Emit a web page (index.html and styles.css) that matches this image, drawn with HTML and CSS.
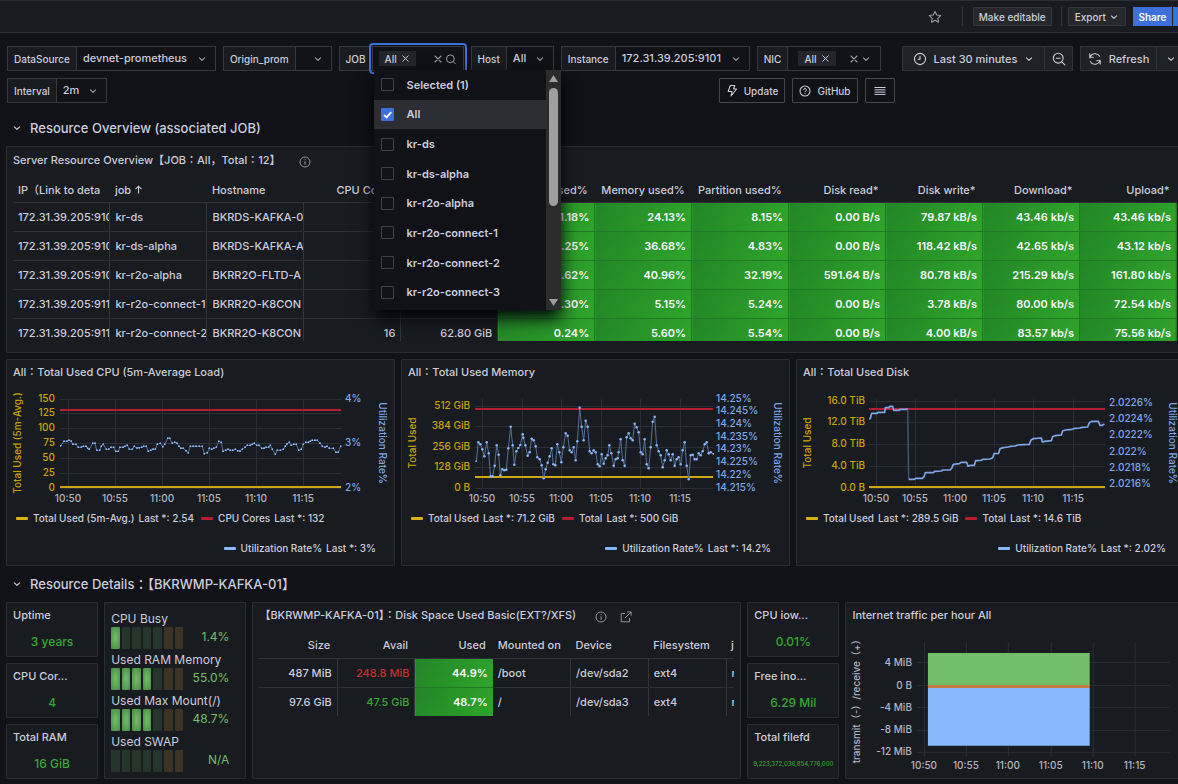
FILE: index.html
```html
<!DOCTYPE html>
<html lang="en">
<head>
<meta charset="utf-8">
<title>Node Exporter Dashboard</title>
<link rel="stylesheet" href="styles.css">
</head>
<body>
<svg class="defs" width="0" height="0" aria-hidden="true">
  <defs>
    <symbol id="chev" viewBox="0 0 10 10"><path d="M2.4 3.8L5 6.4l2.6-2.6" fill="none" stroke="currentColor" stroke-width="1.1" stroke-linecap="round" stroke-linejoin="round"/></symbol>
    <symbol id="cross" viewBox="0 0 10 10"><path d="M2 2l6 6M8 2l-6 6" fill="none" stroke="currentColor" stroke-width="1.1" stroke-linecap="round"/></symbol>
    <symbol id="info" viewBox="0 0 12 12"><circle cx="6" cy="6" r="5" fill="none" stroke="currentColor"/><path d="M6 5.4v3.2M6 3.2v1" stroke="currentColor" stroke-width="1.1"/></symbol>
    <marker id="dot" viewBox="0 0 6 6" refX="3" refY="3" markerWidth="6" markerHeight="6" markerUnits="userSpaceOnUse"><circle cx="3" cy="3" r="2.9" fill="#8ab8ff"/></marker>
    <marker id="dot-lg" viewBox="0 0 6 6" refX="3" refY="3" markerWidth="8" markerHeight="8" markerUnits="userSpaceOnUse"><circle cx="3" cy="3" r="2.8" fill="#8ab8ff"/></marker>
  </defs>
</svg>

<header class="topbar">
  <button class="icon-btn" aria-label="Mark as favorite"><svg width="14" height="14" viewBox="0 0 14 14"><path d="M7 1.4l1.75 3.6 3.9.55-2.85 2.75.7 3.9L7 10.35 3.5 12.2l.7-3.9L1.35 5.55 5.25 5z" fill="none" stroke="currentColor" stroke-width="1.1" stroke-linejoin="round"/></svg></button>
  <span class="divider"></span>
  <button class="tb-btn">Make editable</button>
  <span class="divider"></span>
  <button class="tb-btn export">Export <svg width="10" height="10"><use href="#chev"/></svg></button>
  <span class="share"><button class="share-btn">Share</button><button class="share-btn share-more" aria-label="Share options"></button></span>
</header>

<main class="dash">
  <section class="controls">
    <div class="vars">
      <div class="var"><label for="v-ds">DataSource</label><div class="sel w-ds"><select id="v-ds"><option>devnet-prometheus</option></select><svg width="10" height="10"><use href="#chev"/></svg></div></div>
      <div class="var"><label for="v-or">Origin_prom</label><div class="sel w-or"><select id="v-or"><option></option></select><svg width="10" height="10"><use href="#chev"/></svg></div></div>
      <div class="var job">
        <label for="v-job">JOB</label>
        <div class="multi focus w-job">
          <span class="chip">All <button aria-label="Remove All"><svg width="9" height="9" viewBox="0 0 10 10"><use href="#cross"/></svg></button></span>
          <input id="v-job" type="text">
          <button aria-label="Clear JOB"><svg width="10" height="10"><use href="#cross"/></svg></button>
          <svg width="12" height="12" viewBox="0 0 12 12"><circle cx="5.4" cy="5.8" r="3.9" fill="none" stroke="currentColor"/><path d="M8.3 8.7l2 2" stroke="currentColor" stroke-linecap="round"/></svg>
        </div>
        <div class="menu">
          <div class="options">
            <label class="opt"><input type="checkbox">Selected (1)</label>
            <label class="opt on"><input type="checkbox" checked>All</label>
            <label class="opt"><input type="checkbox">kr-ds</label>
            <label class="opt"><input type="checkbox">kr-ds-alpha</label>
            <label class="opt"><input type="checkbox">kr-r2o-alpha</label>
            <label class="opt"><input type="checkbox">kr-r2o-connect-1</label>
            <label class="opt"><input type="checkbox">kr-r2o-connect-2</label>
            <label class="opt"><input type="checkbox">kr-r2o-connect-3</label>
          </div>
          <div class="scroll">
            <svg width="9" height="7" viewBox="0 0 9 7"><path d="M4.5 0L9 7H0z" fill="#9f9f9f"/></svg>
            <span class="track"><span class="thumb"></span></span>
            <svg width="9" height="7" viewBox="0 0 9 7"><path d="M4.5 7L9 0H0z" fill="#9f9f9f"/></svg>
          </div>
        </div>
      </div>
      <div class="var"><label for="v-ho">Host</label><div class="sel w-ho"><select id="v-ho"><option>All</option></select><svg width="10" height="10"><use href="#chev"/></svg></div></div>
      <div class="var"><label for="v-in">Instance</label><div class="sel w-in"><select id="v-in"><option>172.31.39.205:9101</option></select><svg width="10" height="10"><use href="#chev"/></svg></div></div>
      <div class="var"><label for="v-nic">NIC</label>
        <div class="multi w-nic">
          <span class="chip">All <button aria-label="Remove All"><svg width="9" height="9" viewBox="0 0 10 10"><use href="#cross"/></svg></button></span>
          <input id="v-nic" type="text">
          <button aria-label="Clear NIC"><svg width="10" height="10"><use href="#cross"/></svg></button>
          <svg width="10" height="10"><use href="#chev"/></svg>
        </div>
      </div>
      <div class="var interval"><label for="v-int">Interval</label><div class="sel w-int"><select id="v-int"><option>2m</option></select><svg width="10" height="10"><use href="#chev"/></svg></div></div>
      <div class="links">
        <a href="#update"><svg width="12" height="14" viewBox="0 0 12 14"><path d="M4.2 1.5h4.6L7.6 5h3L5 12l1-4.5H2.2z" fill="none" stroke="currentColor" stroke-width="1.1" stroke-linejoin="round"/></svg>Update</a>
        <a href="#github"><svg width="12" height="12" viewBox="0 0 12 12"><circle cx="6" cy="6" r="5" fill="none" stroke="currentColor" stroke-width="1.1"/><path d="M4.6 5a1.4 1.4 0 1 1 1.9 1.2c-.4.2-.5.4-.5.9M6 8.2v1" fill="none" stroke="currentColor"/></svg>GitHub</a>
        <button aria-label="Dashboards menu"><svg width="12" height="12" viewBox="0 0 12 12"><path d="M.5 2.5h11M.5 4.8h11M.5 7.1h11M.5 9.4h11" stroke="currentColor"/></svg></button>
      </div>
    </div>
    <div class="time">
      <div class="group picker">
        <button class="grow"><svg width="14" height="14" viewBox="0 0 14 14"><circle cx="7" cy="7" r="5.6" fill="none" stroke="currentColor" stroke-width="1.1"/><path d="M7 3.8v3.4H4.6" fill="none" stroke="currentColor" stroke-width="1.1"/></svg><span>Last 30 minutes</span><svg width="10" height="10"><use href="#chev"/></svg></button>
        <button class="zoom" aria-label="Zoom out"><svg width="14" height="14" viewBox="0 0 14 14"><circle cx="6.2" cy="6.2" r="4.9" fill="none" stroke="currentColor" stroke-width="1.1"/><path d="M9.8 9.8l3 3M4.2 6.2h4" stroke="currentColor" stroke-width="1.1" stroke-linecap="round"/></svg></button>
      </div>
      <div class="group refresh">
        <button class="grow"><svg width="14" height="14" viewBox="0 0 14 14"><path d="M2 6a5.2 5.2 0 0 1 9.6-1.7M12 8a5.2 5.2 0 0 1-9.6 1.7M1.8 1.9v3.4h3.4M12.2 12.1V8.7H8.8" fill="none" stroke="currentColor" stroke-width="1.1" stroke-linecap="round" stroke-linejoin="round"/></svg><span>Refresh</span></button>
        <button class="zoom" aria-label="Auto refresh interval"><svg width="10" height="10"><use href="#chev"/></svg></button>
      </div>
    </div>
  </section>

  <h2 class="row-title"><svg width="10" height="10"><use href="#chev"/></svg>Resource Overview (associated JOB)</h2>

  <section class="panel overview">
    <h3>Server Resource Overview【JOB：All<span class="sc">，</span>Total：12】 <svg class="info" width="12" height="12"><use href="#info"/></svg></h3>
    <div class="clip server-clip"><table class="servers">
      <thead><tr><th>IP（Link to deta</th><th>job <svg width="9" height="9" viewBox="0 0 9 9"><path d="M4.5 8.5v-7M1.5 4.2l3-3 3 3" fill="none" stroke="currentColor" stroke-width="1.1"/></svg></th><th>Hostname</th><th class="n">CPU Cores</th><th class="n">Memory</th><th class="n">CPU used%</th><th class="n">Memory used%</th><th class="n">Partition used%</th><th class="n">Disk read*</th><th class="n">Disk write*</th><th class="n">Download*</th><th class="n">Upload*</th></tr></thead>
      <tbody>
        <tr><td>172.31.39.205:910</td><td>kr-ds</td><td>BKRDS-KAFKA-0</td><td class="n">16</td><td class="n">62.80 GiB</td><td class="g">1.18%</td><td class="g">24.13%</td><td class="g">8.15%</td><td class="g">0.00 B/s</td><td class="g">79.87 kB/s</td><td class="g">43.46 kb/s</td><td class="g">43.46 kb/s</td></tr>
        <tr><td>172.31.39.205:910</td><td>kr-ds-alpha</td><td>BKRDS-KAFKA-A</td><td class="n">16</td><td class="n">62.80 GiB</td><td class="g">1.25%</td><td class="g">36.68%</td><td class="g">4.83%</td><td class="g">0.00 B/s</td><td class="g">118.42 kB/s</td><td class="g">42.65 kb/s</td><td class="g">43.12 kb/s</td></tr>
        <tr><td>172.31.39.205:910</td><td>kr-r2o-alpha</td><td>BKRR2O-FLTD-A</td><td class="n">16</td><td class="n">62.80 GiB</td><td class="g">1.62%</td><td class="g">40.96%</td><td class="g">32.19%</td><td class="g">591.64 B/s</td><td class="g">80.78 kB/s</td><td class="g">215.29 kb/s</td><td class="g">161.80 kb/s</td></tr>
        <tr><td>172.31.39.205:911</td><td>kr-r2o-connect-1</td><td>BKRR2O-K8CON</td><td class="n">16</td><td class="n">62.80 GiB</td><td class="g">0.30%</td><td class="g">5.15%</td><td class="g">5.24%</td><td class="g">0.00 B/s</td><td class="g">3.78 kB/s</td><td class="g">80.00 kb/s</td><td class="g">72.54 kb/s</td></tr>
        <tr><td>172.31.39.205:911</td><td>kr-r2o-connect-2</td><td>BKRR2O-K8CON</td><td class="n">16</td><td class="n">62.80 GiB</td><td class="g">0.24%</td><td class="g">5.60%</td><td class="g">5.54%</td><td class="g">0.00 B/s</td><td class="g">4.00 kB/s</td><td class="g">83.57 kb/s</td><td class="g">75.56 kb/s</td></tr>
      </tbody>
    </table></div>
  </section>

  <section class="charts">
    <article class="panel chart">
      <h3>All：Total Used CPU (5m-Average Load)</h3>
      <svg class="plot" viewBox="7 386 387 122" role="img" aria-label="Total Used CPU">
        <path class="grid" d="M60 399.5h281M60 413.5h281M60 428.5h281M60 443.5h281M60 458.5h281M60 473.5h281M60 488.5h281M68.5 399v90M115.5 399v90M162.5 399v90M209.5 399v90M256.5 399v90M303.5 399v90"/>
        <g class="y end"><text x="55" y="402">150</text><text x="55" y="416">125</text><text x="55" y="431">100</text><text x="55" y="446">75</text><text x="55" y="461">50</text><text x="55" y="476">25</text><text x="55" y="491">0</text></g>
        <text class="y mid" transform="translate(21 443) rotate(-90)">Total Used (5m-Avg.)</text>
        <g class="b"><text x="345" y="402">4%</text><text x="345" y="446">3%</text><text x="345" y="491">2%</text></g>
        <text class="b mid" transform="translate(379 443) rotate(90)">Utilization Rate%</text>
        <g class="t mid"><text x="68" y="502">10:50</text><text x="115" y="502">10:55</text><text x="162" y="502">11:00</text><text x="209" y="502">11:05</text><text x="256" y="502">11:10</text><text x="303" y="502">11:15</text></g>
        <path class="red" d="M60 410h281"/><path class="yel" d="M60 487h281"/>
        <svg x="0" y="360" width="400" height="210" viewBox="0 0 1200 630"><polyline class="series" marker-start="url(#dot)" marker-mid="url(#dot)" marker-end="url(#dot)" points="182,257 192,244 201,244 207,241 214,244 219,253 228,253 235,262 244,262 250,259 258,259 263,265 268,268 278,250 285,250 290,271 299,271 304,259 310,253 319,268 326,268 333,262 341,262 347,274 355,274 360,262 369,262 375,259 382,256 388,268 397,268 403,259 411,264 418,263 425,262 431,259 439,259 445,274 452,271 459,268 466,268 472,253 481,250 488,260 494,253 503,235 509,235 517,250 524,247 531,250 537,259 543,265 550,265 558,272 565,278 571,259 579,259 588,259 598,259 607,259 613,281 622,278 628,265 635,268 641,265 649,262 656,244 664,247 669,274 677,271 684,268 691,271 698,271 706,268 713,272 720,274 727,268 735,262 742,256 751,256 757,253 763,250 770,256 777,256 785,265 792,265 798,262 806,262 811,256 817,268 826,283 832,271 841,271 850,268 856,259 861,252 868,247 874,256 881,253 889,253 896,271 904,268 910,253 917,247 925,247 931,244 937,241 945,241 952,241 960,250 967,259 975,262 981,259 988,265 1000,265 1008,277 1015,277 1022,259"/></svg>
      </svg>
      <div class="legend"><span><i class="ly"></i>Total Used (5m-Avg.)<b>Last *: 2.54</b></span><span><i class="lr"></i>CPU Cores<b>Last *: 132</b></span></div>
      <div class="legend right"><span><i class="lb"></i>Utilization Rate%<b>Last *: 3%</b></span></div>
    </article>

    <article class="panel chart">
      <h3>All：Total Used Memory</h3>
      <svg class="plot" viewBox="402 386 387 122" role="img" aria-label="Total Used Memory">
        <path class="grid" d="M475 406.5h238M475 426.5h238M475 447.5h238M475 467.5h238M475 488.5h238M482.5 399v90M522.5 399v90M561.5 399v90M601.5 399v90M640.5 399v90M680.5 399v90"/>
        <g class="y end"><text x="470" y="409">512 GiB</text><text x="470" y="429">384 GiB</text><text x="470" y="450">256 GiB</text><text x="470" y="470">128 GiB</text><text x="470" y="491">0 B</text></g>
        <text class="y mid" transform="translate(416 443) rotate(-90)">Total Used</text>
        <g class="b"><text x="716" y="402">14.25%</text><text x="716" y="414">14.245%</text><text x="716" y="427">14.24%</text><text x="716" y="440">14.235%</text><text x="716" y="452">14.23%</text><text x="716" y="465">14.225%</text><text x="716" y="478">14.22%</text><text x="716" y="491">14.215%</text></g>
        <text class="b mid" transform="translate(774 443) rotate(90)">Utilization Rate%</text>
        <g class="t mid"><text x="482" y="502">10:50</text><text x="522" y="502">10:55</text><text x="561" y="502">11:00</text><text x="601" y="502">11:05</text><text x="640" y="502">11:10</text><text x="680" y="502">11:15</text></g>
        <path class="red" d="M475 409h238"/><path class="yel" d="M475 477h238"/>
        <svg x="400" y="360" width="395" height="210" viewBox="0 0 1185 630"><polyline class="series" marker-start="url(#dot)" marker-mid="url(#dot-lg)" marker-end="url(#dot)" points="229,304 235,247 241,253 247,268 253,289 260,247 266,280 272,349 278,349 284,317 290,256 296,284 301,346 307,328 313,331 319,329 325,265 332,200 338,256 343,314 349,274 355,264 361,255 368,223 370,233 376,256 383,287 389,277 395,236 401,241 407,259 412,292 419,298 425,316 431,355 437,328 443,308 449,289 455,265 460,313 466,316 472,253 478,277 484,307 490,262 497,220 503,227 509,271 515,277 521,262 527,301 532,244 539,143 545,200 551,241 557,182 563,200 569,274 575,280 581,271 587,277 593,313 599,319 605,283 611,311 617,295 623,286 628,256 634,280 641,317 647,298 653,295 656,277 662,238 668,301 674,317 680,232 686,220 692,235 698,241 704,191 710,202 716,217 722,277 728,283 734,238 740,313 746,325 752,262 758,185 764,170 770,256 776,274 782,286 788,322 794,301 800,271 806,283 812,301 818,283 824,317 830,298 836,292 842,313 848,271 854,247 860,317 866,358 872,286 878,284 884,298 890,298 896,280 902,286 908,274 914,253 920,247 926,280 932,277 940,281"/></svg>
      </svg>
      <div class="legend"><span><i class="ly"></i>Total Used<b>Last *: 71.2 GiB</b></span><span><i class="lr"></i>Total<b>Last *: 500 GiB</b></span></div>
      <div class="legend right"><span><i class="lb"></i>Utilization Rate%<b>Last *: 14.2%</b></span></div>
    </article>

    <article class="panel chart">
      <h3>All：Total Used Disk</h3>
      <svg class="plot" viewBox="797 386 387 122" role="img" aria-label="Total Used Disk">
        <path class="grid" d="M869 401.5h236M869 422.5h236M869 444.5h236M869 466.5h236M869 488.5h236M876.5 399v90M915.5 399v90M955.5 399v90M994.5 399v90M1033.5 399v90M1073.5 399v90"/>
        <g class="y end"><text x="865" y="404">16.0 TiB</text><text x="865" y="425">12.0 TiB</text><text x="865" y="447">8.0 TiB</text><text x="865" y="469">4.0 TiB</text><text x="865" y="491">0.0 B</text></g>
        <text class="y mid" transform="translate(811 443) rotate(-90)">Total Used</text>
        <g class="b"><text x="1109" y="406">2.0226%</text><text x="1109" y="422">2.0224%</text><text x="1109" y="438">2.0222%</text><text x="1109" y="455">2.022%</text><text x="1109" y="471">2.0218%</text><text x="1109" y="487">2.0216%</text></g>
        <text class="b mid" transform="translate(1169 443) rotate(90)">Utilization Rate%</text>
        <g class="t mid"><text x="876" y="502">10:50</text><text x="915" y="502">10:55</text><text x="955" y="502">11:00</text><text x="994" y="502">11:05</text><text x="1033" y="502">11:10</text><text x="1073" y="502">11:15</text></g>
        <path class="red" d="M869 409h236"/><path class="yel" d="M869 487h236"/>
        <svg x="790" y="360" width="388" height="210" viewBox="0 0 1164 630"><path class="drop" d="M353 145l3 213"/><path class="step" d="M237 176h4l4-16h17l2-3h20l2-14h11l2-4h9l3 12h17l2-3h20l3-3M356 358L373 358 377 355 397 355 402 350 406 338 430 338 434 334 454 333 458 330 480 330 485 325 490 313 508 311 513 307 530 307 534 319 541 316 553 316 557 302 574 301 578 298 600 297 608 293 612 281 626 280 630 266 640 263 655 261 662 259 676 258 683 255 700 254 718 253 723 240 730 236 754 234 757 246 764 244 784 242 788 230 795 227 814 225 818 213 826 210 846 208 855 205 870 204 876 202 893 201 898 188 906 184 925 184 930 196 937 196 943 192"/></svg>
      </svg>
      <div class="legend"><span><i class="ly"></i>Total Used<b>Last *: 289.5 GiB</b></span><span><i class="lr"></i>Total<b>Last *: 14.6 TiB</b></span></div>
      <div class="legend right"><span><i class="lb"></i>Utilization Rate%<b>Last *: 2.02%</b></span></div>
    </article>
  </section>

  <h2 class="row-title details"><svg width="10" height="10"><use href="#chev"/></svg>Resource Details：【BKRWMP-KAFKA-01】</h2>

  <section class="bottom">
    <div class="stats">
      <article class="panel stat"><h3>Uptime</h3><p>3 years</p></article>
      <article class="panel stat"><h3>CPU Cor...</h3><p>4</p></article>
      <article class="panel stat"><h3>Total RAM</h3><p>16 GiB</p></article>
    </div>
    <article class="panel gauges">
      <h4>CPU Busy</h4><div class="gauge"><div class="cells"><i class="on"></i><i></i><i></i><i></i><i></i><i class="w"></i><i class="w"></i></div><span>1.4%</span></div>
      <h4>Used RAM Memory</h4><div class="gauge"><div class="cells"><i class="on"></i><i class="on"></i><i class="on"></i><i class="on"></i><i></i><i class="w"></i><i class="w"></i></div><span>55.0%</span></div>
      <h4>Used Max Mount(/)</h4><div class="gauge"><div class="cells"><i class="on"></i><i class="on"></i><i class="on"></i><i class="on"></i><i></i><i class="w"></i><i class="w"></i></div><span>48.7%</span></div>
      <h4>Used SWAP</h4><div class="gauge"><div class="cells"><i></i><i></i><i></i><i></i><i></i><i class="w"></i><i class="w"></i></div><span>N/A</span></div>
    </article>
    <article class="panel disks">
      <h3>【BKRWMP-KAFKA-01】：Disk Space Used Basic(EXT?/XFS) <svg class="info" width="12" height="12"><use href="#info"/></svg> <svg class="ext" width="12" height="12" viewBox="0 0 12 12"><path d="M5 2.5H1.2v8.3h8.3V7M7.2.9h3.9v3.9M11 1L4.8 7.2" fill="none" stroke="currentColor" stroke-linejoin="round"/></svg></h3>
      <div class="clip"><table class="fs">
        <thead><tr><th class="n">Size</th><th class="n">Avail</th><th class="n">Used</th><th>Mounted on</th><th>Device</th><th>Filesystem</th><th>job</th></tr></thead>
        <tbody>
          <tr><td class="n">487 MiB</td><td class="n bad">248.8 MiB</td><td class="g">44.9%</td><td>/boot</td><td>/dev/sda2</td><td>ext4</td><td>r</td></tr>
          <tr><td class="n">97.6 GiB</td><td class="n good">47.5 GiB</td><td class="g">48.7%</td><td>/</td><td>/dev/sda3</td><td>ext4</td><td>r</td></tr>
        </tbody>
      </table></div>
    </article>
    <div class="stats">
      <article class="panel stat"><h3>CPU iow...</h3><p>0.01%</p></article>
      <article class="panel stat"><h3>Free ino...</h3><p>6.29 Mil</p></article>
      <article class="panel stat"><h3>Total filefd</h3><p class="tiny">9,223,372,036,854,776,000</p></article>
    </div>
    <article class="panel traffic">
      <h3>Internet traffic per hour All</h3>
      <svg class="plot" viewBox="846 629 338 146" role="img" aria-label="Internet traffic per hour">
        <path class="grid" d="M917 662.5h253M917 685.5h253M917 707.5h253M917 730.5h253M917 752.5h253M924.5 642v115M966.5 642v115M1008.5 642v115M1051.5 642v115M1093.5 642v115M1135.5 642v115"/>
        <g class="t end"><text x="912" y="666">4 MiB</text><text x="912" y="689">0 B</text><text x="912" y="711">-4 MiB</text><text x="912" y="733">-8 MiB</text><text x="912" y="755">-12 MiB</text></g>
        <g class="t mid"><text x="924" y="769">10:50</text><text x="966" y="769">10:55</text><text x="1008" y="769">11:00</text><text x="1051" y="769">11:05</text><text x="1093" y="769">11:10</text><text x="1135" y="769">11:15</text></g>
        <text class="t mid" transform="translate(860 699) rotate(-90)">transmit（-）/receive（+）</text>
        <path fill="#73bf69" d="M928 653h162v33H928z"/><path fill="#8ab8ff" d="M928 688h162v58H928z"/><path fill="#c27d3f" d="M928 685h162v3H928z"/>
      </svg>
    </article>
  </section>
</main>
</body>
</html>
```

FILE: styles.css
```css
* { box-sizing: border-box; }
html { overflow: hidden; background: #111217; }
body {
  margin: 0;
  font: 500 11px/16px Inter, "Noto Sans CJK TC", sans-serif;
  color: #ccccdc;
  background: #111217;
}
h2, h3, h4, p { margin: 0; font-weight: 500; }
button, select, input { font: inherit; color: inherit; margin: 0; padding: 0; border: 0; background: none; }
svg { flex: none; }
.defs { position: absolute; }

.topbar {
  display: flex;
  align-items: center;
  justify-content: flex-end;
  height: 33px;
  background: #181b1f;
  border: solid #2c2e33;
  border-width: 1px 0;
  overflow: hidden;
}
.icon-btn { display: flex; color: #9a9ba6; margin-right: 20px; }
.divider { width: 1px; height: 19px; background: #34363c; }
.tb-btn {
  display: flex;
  align-items: center;
  justify-content: center;
  gap: 3px;
  height: 19px;
  margin: 0 9px 0 10px;
  padding: 0 5px;
  background: #26282d;
  border: 1px solid #36383e;
  border-radius: 1px;
  font-size: 10px;
}
.tb-btn.export { margin: 0 7px 0 6px; padding: 0 6px; }
.share { display: flex; gap: 1px; }
.share-btn { width: 39px; height: 19px; background: #3d71d9; color: #fff; font-size: 10px; font-weight: 600; }
.share-more { width: 5px; }

.dash { margin: 0 -7px 0 6px; }
.controls { display: flex; gap: 7px; padding-top: 13px; }
.vars { flex: 1; display: flex; flex-wrap: wrap; gap: 7px; padding-left: 1px; }
.var { display: flex; height: 25px; position: relative; }
.var > label {
  display: flex;
  align-items: center;
  padding: 0 6px;
  background: #181b1f;
  border: 1px solid #36383e;
  border-right: 0;
  font-size: 10px;
  white-space: nowrap;
}
.sel { position: relative; border: 1px solid #36383e; }
.sel select { appearance: none; width: 100%; height: 22px; padding-left: 6px; outline: 0; display: block; }
.sel option { background: #181b1f; }
.sel svg { position: absolute; right: 8px; top: 7px; color: #9a9ba6; pointer-events: none; }
.w-ds { width: 140px; }
.w-or { width: 37px; }
.w-job { width: 92px; }
.w-ho { width: 48px; }
.w-in { width: 135px; }
.w-nic { width: 94px; }
.w-int { width: 51px; }
.multi {
  display: flex;
  align-items: center;
  gap: 2px;
  padding: 0 9px 0 10px;
  border: 1px solid #36383e;
  color: #9a9ba6;
}
.focus { outline: 2px solid #3d71d9; outline-offset: 1px; border-radius: 1px; padding: 0 6px; }
.multi input { flex: 1; min-width: 0; width: 0; outline: 0; }
.multi button { display: flex; }
.chip {
  display: flex;
  align-items: center;
  gap: 4px;
  height: 15px;
  padding: 0 6px;
  background: #22252b;
  color: #ccccdc;
  font-size: 10px;
}
.menu {
  position: absolute;
  z-index: 5;
  top: 24px;
  right: -97px;
  width: 187px;
  height: 240px;
  display: flex;
  background: #111217;
  box-shadow: 0 8px 16px #010409;
}
.options { flex: 1; display: flex; flex-direction: column; height: 237px; }
.opt { flex: 1; display: flex; align-items: center; gap: 13px; padding-left: 7px; font-weight: 600; }
.opt.on { background: #2d2e33; }
.opt input { appearance: none; width: 13px; height: 13px; border: 1px solid #3f4147; border-radius: 1px; }
.opt input:checked {
  border-color: #3d71d9;
  background: #3d71d9 url("data:image/svg+xml,%3Csvg xmlns='http://www.w3.org/2000/svg' viewBox='0 0 12 12'%3E%3Cpath d='M2.3 6.6l2.6 2.6L10 3.5' fill='none' stroke='white' stroke-width='2'/%3E%3C/svg%3E");
}
.scroll { display: flex; flex-direction: column; align-items: center; width: 15px; padding: 5px 0 4px; background: #2c2c2c; }
.track { flex: 1; padding-top: 6px; }
.thumb { display: block; width: 9px; height: 118px; border-radius: 5px; background: #9f9f9f; }

.links { display: flex; gap: 7px; margin-left: auto; }
.links a, .links button {
  display: flex;
  align-items: center;
  justify-content: center;
  gap: 6px;
  width: 66px;
  height: 25px;
  border: 1px solid #45474d;
  border-radius: 1px;
  color: #ccccdc;
  font-size: 10px;
  text-decoration: none;
}
.links button { width: 30px; }
.time { display: flex; gap: 7px; width: 283px; align-items: flex-start; }
.group { display: flex; height: 25px; background: #1f2126; border: 1px solid #303238; }
.group button { display: flex; align-items: center; justify-content: center; }
.group .grow { flex: 1; gap: 7px; }
.picker { width: 171px; }
.refresh { flex: 1; }
.group .zoom { width: 28px; border-left: 1px solid #303238; }

.row-title { display: flex; align-items: center; gap: 8px; height: 43px; padding: 6px 0 0 6px; font-size: 13px; line-height: 18px; }
.row-title.details { height: 36px; padding-top: 0; }

.panel { background: #181b1f; border: 1px solid #2a2c31; border-radius: 1px; min-width: 0; }
.panel h3 { font-size: 11px; line-height: 24px; padding-left: 6px; white-space: nowrap; overflow: hidden; }
.info, .ext { color: #8e8f9a; vertical-align: -4px; }
.info { margin-left: 16px; }
.ext { margin-left: 10px; }
.sc { font-family: "Noto Sans CJK SC", sans-serif; }

table { border-collapse: collapse; table-layout: fixed; font-size: 11px; }
th { text-align: left; font-weight: 500; height: 25px; border-bottom: 1px solid #2e3036; padding: 0 5px; white-space: nowrap; overflow: hidden; }
td { height: 29px; padding: 0 0 0 5px; white-space: nowrap; overflow: hidden; border-right: 1px solid #33353b; border-bottom: 1px solid #2e3036; }
.n { text-align: right; }
td.n { padding-right: 5px; }
th.n { padding: 0 7px 0 0; }
td.g {
  text-align: right;
  padding-right: 5px;
  color: #f7f8fa;
  font-weight: 600;
  background: linear-gradient(120deg, #238527, #2fa52b);
  border-color: #1f7a24;
}
.clip { overflow: hidden; margin-top: 6px; }
.overview { height: 207px; padding: 0 7px 0 6px; }
.overview h3 { padding-left: 0; }
.server-clip { height: 163px; }
.servers { width: 100%; }
.servers th { height: 24px; }

.charts { display: grid; grid-template-columns: repeat(3, 1fr); gap: 6px; margin-top: 6px; }
.chart { height: 207px; }
.plot { display: block; width: 100%; margin-top: 2px; overflow: visible; }
.plot text { font-size: 10px; }
.grid { stroke: #2b2e33; fill: none; }
.y { fill: #cca300; }
.b { fill: #7da7e8; }
.t { fill: #b4b4c2; }
.end { text-anchor: end; }
.mid { text-anchor: middle; }
.red { stroke: #b51e30; stroke-width: 2; }
.yel { stroke: #cfa616; stroke-width: 2; }
.series { fill: none; stroke: #55719b; stroke-width: 3; }
.step { fill: none; stroke: #7da7e8; stroke-width: 5; stroke-linejoin: round; }
.drop { stroke: #43587a; stroke-width: 4; }
.legend { display: flex; gap: 7px; height: 20px; padding: 0 9px; font-size: 10px; line-height: 20px; white-space: nowrap; }
.legend.right { justify-content: flex-end; margin-top: 10px; padding-right: 18px; }
.legend span { display: flex; align-items: center; }
.legend i { width: 12px; height: 3px; border-radius: 1px; margin-right: 5px; }
.legend b { font-weight: 500; margin-left: 4px; }
.ly { background: #dbb017; }
.lr { background: #b51e30; }
.lb { background: #8ab8ff; }

.bottom { display: grid; grid-template-columns: 92fr 142fr 488fr 92fr 339fr; gap: 6px; height: 177px; }
.stats { display: flex; flex-direction: column; gap: 6px; min-width: 0; }
.stat { flex: 1; display: flex; flex-direction: column; }
.stat p { flex: 1; display: flex; align-items: center; justify-content: center; padding-top: 1px; color: #37a832; font-size: 12px; }
.stat .tiny { font-size: 6px; }
.gauges { padding: 8px 16px 0 6px; }
.gauges h4 { font-size: 12px; line-height: 16px; font-weight: 400; height: 16px; white-space: nowrap; }
.gauge { display: flex; justify-content: space-between; height: 25px; color: #73bf69; font-size: 12px; line-height: 20px; font-weight: 400; }
.cells { display: flex; gap: 2px; width: 72px; }
.cells i { flex: 1; height: 22px; background: #25352b; border-radius: 1px; }
.cells .w { background: #3d3322; }
.cells .on { background: radial-gradient(#73bf69, #468a44); }
.disks { padding: 0 6px; }
.disks h3 { padding-left: 0; }
.fs { width: 545px; }
.fs .bad { color: #c4302b; }
.fs .good { color: #37a832; }
.fs tr:last-child td { border-bottom: 0; }
.fs .g { border-right: 0; }
```
